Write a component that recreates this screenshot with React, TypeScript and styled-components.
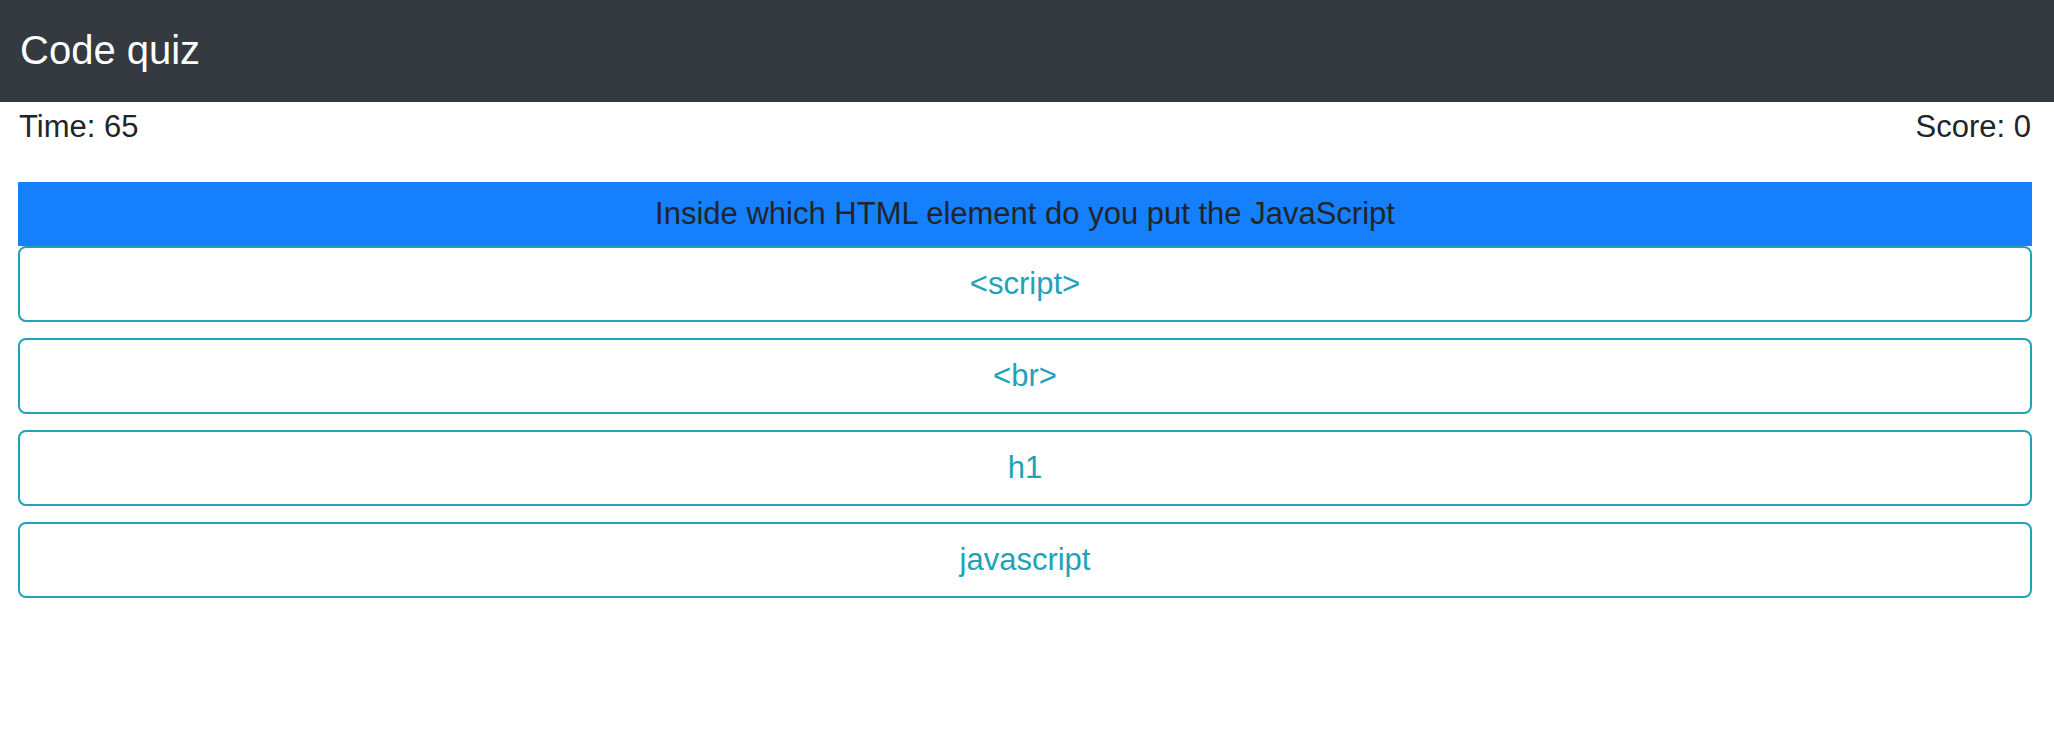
import styled, {createGlobalStyle} from "styled-components";

const GlobalStyle = createGlobalStyle`
  html, body {
    margin: 0;
    padding: 0;
    background: #ffffff;
  }

  body {
    font-family: "Liberation Sans", Arial, Helvetica, sans-serif;
    color: #212529;
  }
`;

const NavBar = styled.nav`
  display: flex;
  align-items: center;
  height: 102px;
  padding: 0 20px;
  background: #343a40;
`;

const Brand = styled.div`
  color: #ffffff;
  font-size: 40px;
  line-height: 1;
  padding-bottom: 2px;
`;

const Main = styled.main`
  display: flex;
  flex-direction: column;
  padding: 0 22px 0 18px;
`;

const StatusRow = styled.div`
  display: flex;
  justify-content: space-between;
  height: 45px;
  padding: 2px 1px 0 1px;
  font-size: 31px;
  line-height: 45px;
`;

const Question = styled.div`
  display: flex;
  align-items: center;
  justify-content: center;
  height: 64px;
  margin-top: 33px;
  background: #167ffc;
  color: #212529;
  font-size: 31px;
`;

const AnswerList = styled.div`
  display: flex;
  flex-direction: column;
  gap: 16px;
`;

const AnswerButton = styled.button`
  display: flex;
  align-items: center;
  justify-content: center;
  box-sizing: border-box;
  height: 76px;
  width: 100%;
  padding: 0;
  border: 2px solid #22a2b7;
  border-radius: 8px;
  background: #ffffff;
  color: #22a2b7;
  font-family: "Liberation Sans", Arial, Helvetica, sans-serif;
  font-size: 31px;
  cursor: pointer;
`;

const answers = ["<script>", "<br>", "h1", "javascript"];

export default function App() {
    return (
        <>
            <GlobalStyle/>
            <NavBar>
                <Brand>Code quiz</Brand>
            </NavBar>
            <Main>
                <StatusRow>
                    <span>Time: 65</span>
                    <span>Score: 0</span>
                </StatusRow>
                <Question>Inside which HTML element do you put the JavaScript</Question>
                <AnswerList>
                    {answers.map((answer) => (
                        <AnswerButton key={answer}>{answer}</AnswerButton>
                    ))}
                </AnswerList>
            </Main>
        </>
    );
}
